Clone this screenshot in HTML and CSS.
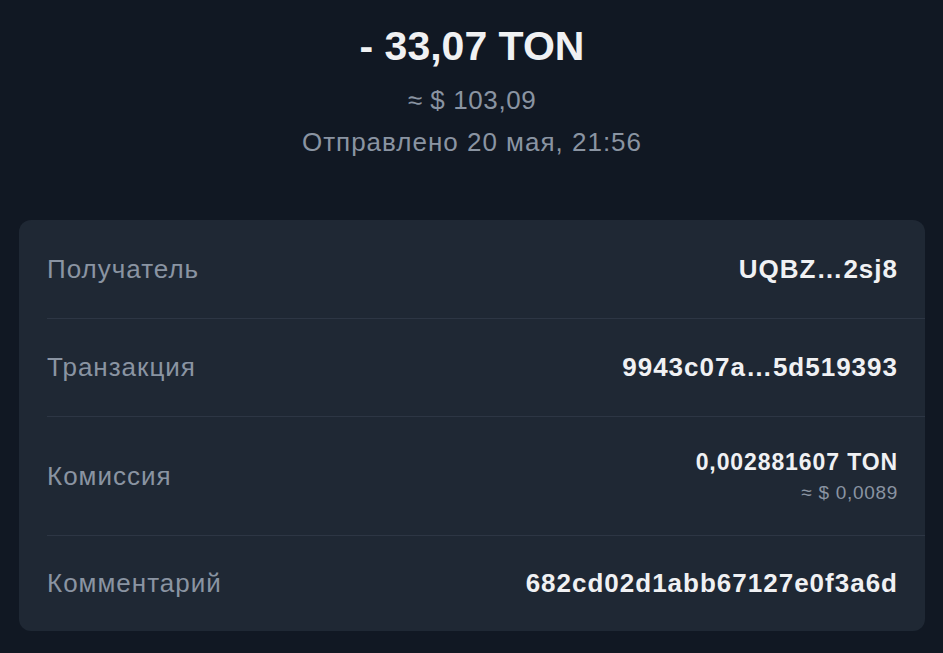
FILE: index.html
```html
<!DOCTYPE html>
<html>
<head>
	<title>Транзакция</title>
	<link rel="stylesheet" href="styles.css">
</head>
<body>
	<div id="wrapper">
		<div class="summary">
			<h1 class="amount">- 33,07 TON</h1>
			<p class="fiat">≈ $ 103,09</p>
			<p class="date">Отправлено 20 мая, 21:56</p>
		</div>

		<ul class="details">
			<li class="row">
				<span class="label">Получатель</span>
				<span class="value">UQBZ…2sj8</span>
			</li>
			<li class="row">
				<span class="label">Транзакция</span>
				<span class="value">9943c07a…5d519393</span>
			</li>
			<li class="row row-fee">
				<span class="label">Комиссия</span>
				<span class="value-group">
					<span class="value small">0,002881607 TON</span>
					<span class="sub">≈ $ 0,0089</span>
				</span>
			</li>
			<li class="row">
				<span class="label">Комментарий</span>
				<span class="value">682cd02d1abb67127e0f3a6d</span>
			</li>
		</ul>
	</div>
</body>
</html>
```

FILE: styles.css
```css
html {
	background-color: #111823;
}
body {
	margin: 0;
	font-family: "Liberation Sans", Arial, sans-serif;
	color: #f0f1f3;
}
#wrapper {
	padding: 0 18px 0 19px;
}

.summary {
	text-align: center;
	padding-top: 22px;
	padding-bottom: 63px;
}
.amount {
	margin: 0;
	font-size: 41px;
	line-height: 48px;
	font-weight: bold;
}
.fiat, .date {
	margin: 0;
	color: #8a94a2;
	font-size: 26px;
	line-height: 30px;
}
.fiat {
	margin-top: 15px;
	letter-spacing: 0.6px;
}
.date {
	margin-top: 12px;
	letter-spacing: 1px;
}

.details {
	margin: 0;
	padding: 0 0 0 28px;
	list-style: none;
	background-color: #1f2834;
	border-radius: 12px;
}
.row {
	display: flex;
	justify-content: space-between;
	align-items: center;
	height: 97px;
	padding-right: 27px;
	border-bottom: 1px solid #2d3644;
}
.row:first-child {
	height: 98px;
}
.row:last-child {
	height: 95px;
	border-bottom: none;
}
.row-fee {
	height: 118px;
}
.label {
	color: #8a94a2;
	font-size: 26px;
	letter-spacing: 1px;
}
.value {
	font-size: 26px;
	font-weight: bold;
	letter-spacing: 1px;
}
.value-group {
	display: flex;
	flex-direction: column;
	align-items: flex-end;
}
.value.small {
	font-size: 23px;
	letter-spacing: 0.9px;
}
.sub {
	color: #8a94a2;
	font-size: 19px;
	letter-spacing: 0.7px;
	margin-top: 6px;
}
```
